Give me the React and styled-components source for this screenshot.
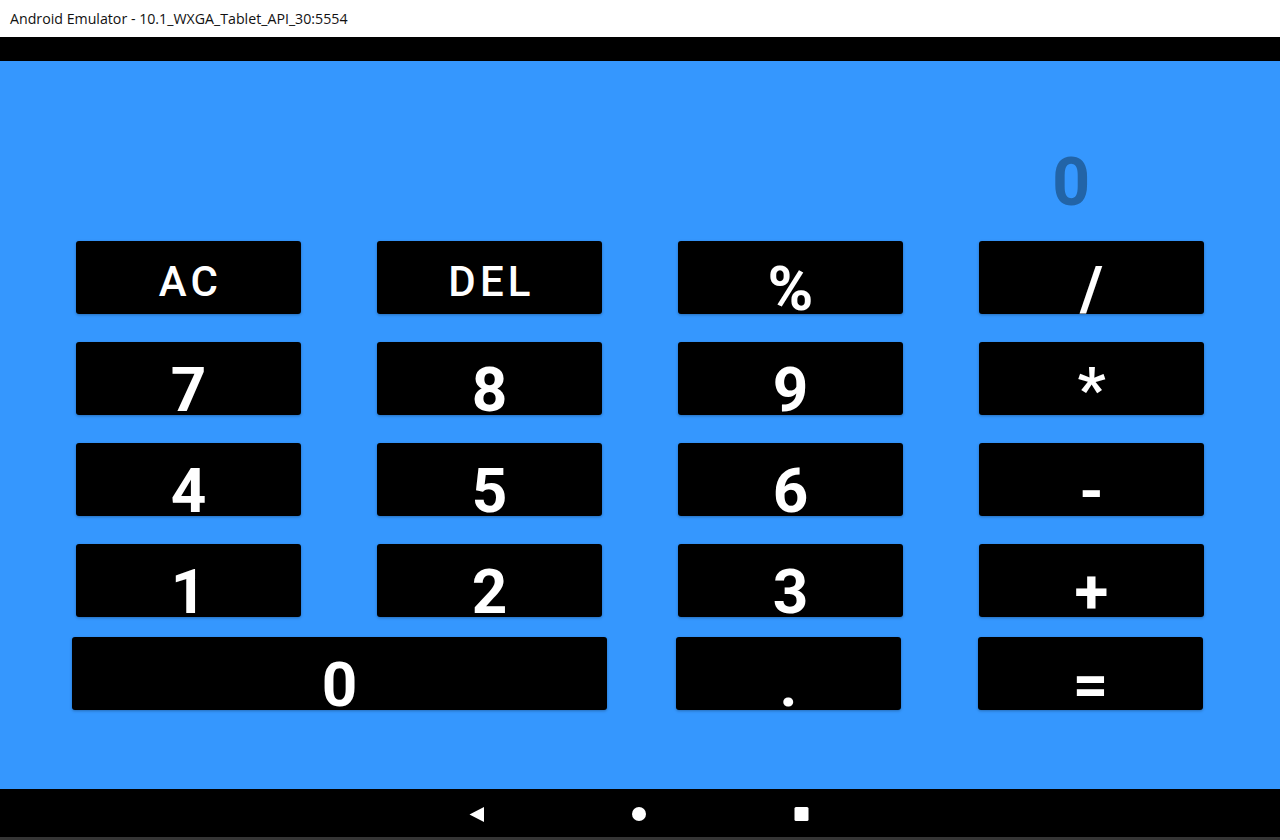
import React from "react"
import styled, { createGlobalStyle } from "styled-components"

const GlobalStyle = createGlobalStyle`
  html, body {
    margin: 0;
    padding: 0;
    background: #fff;
  }
  #root {
    width: 1280px;
    height: 840px;
  }
`

const Window = styled.div`
  width: 1280px;
  height: 840px;
  display: flex;
  flex-direction: column;
  overflow: hidden;
`

const TitleBar = styled.div`
  height: 37px;
  flex: none;
  background: #fff;
  display: flex;
  align-items: center;
  padding-left: 10px;
  padding-bottom: 1px;
  box-sizing: border-box;
  font-family: "Open Sans", "Noto Sans", sans-serif;
  font-size: 14.2px;
  color: #111;
`

const StatusBar = styled.div`
  height: 24px;
  flex: none;
  background: #000;
`

const Screen = styled.div`
  flex: 1;
  background: #3597fe;
  font-family: Roboto, "Noto Sans", sans-serif;
  display: flex;
  flex-direction: column;
`

const Display = styled.div`
  height: 180px;
  box-sizing: border-box;
  padding-top: 89px;
  padding-right: 190px;
  text-align: right;
  font-size: 66px;
  line-height: 1;
  font-weight: 700;
  color: #2264a7;
`

const Keypad = styled.div`
  display: grid;
  grid-template-columns: repeat(4, 225px);
  grid-auto-rows: 73px;
  column-gap: 76px;
  row-gap: 28px;
  padding-left: 76px;
`

const BottomRow = styled.div`
  display: flex;
  margin-top: 20px;
  padding-left: 72px;
  height: 73px;
`

const Key = styled.button`
  all: unset;
  box-sizing: border-box;
  width: ${p => p.$w || 225}px;
  height: 73px;
  margin-left: ${p => p.$ml || 0}px;
  background: #000;
  border-radius: 3px;
  box-shadow: 0 1px 3px rgba(0, 0, 0, 0.28);
  color: #fff;
  text-align: center;
  padding-top: ${p => (p.$word ? 8 : 17)}px;
  padding-left: ${p => (p.$word ? 4 : 0)}px;
  line-height: 1;
  font-family: Roboto, "Noto Sans", sans-serif;
  font-size: ${p => (p.$word ? 42 : 62)}px;
  font-weight: ${p => (p.$word ? 500 : 700)};
  letter-spacing: ${p => (p.$word ? "0.1em" : "0")};
  white-space: nowrap;
  overflow: visible;
`

const NavBar = styled.div`
  height: 48px;
  flex: none;
  background: #000;
  display: flex;
  align-items: center;
  justify-content: center;
  gap: 148px;
  padding-right: 2px;
  padding-top: 2px;
  box-sizing: border-box;
`

const Strip = styled.div`
  height: 3px;
  flex: none;
  background: #353535;
`

const BackIcon = () => (
  <svg width="15" height="15" viewBox="0 0 15 15">
    <path d="M15 0 L0.5 7.5 L15 15 Z" fill="#fff" />
  </svg>
)

const HomeIcon = () => (
  <svg width="14" height="14" viewBox="0 0 14 14">
    <circle cx="7" cy="7" r="7" fill="#fff" />
  </svg>
)

const RecentIcon = () => (
  <svg width="15" height="14" viewBox="0 0 15 14">
    <rect x="0.5" y="0" width="14" height="14" rx="1.5" fill="#fff" />
  </svg>
)

const rows = [
  ["AC", "DEL", "%", "/"],
  ["7", "8", "9", "*"],
  ["4", "5", "6", "-"],
  ["1", "2", "3", "+"]
]

export default function App() {
  return (
    <Window>
      <GlobalStyle />
      <TitleBar>Android Emulator - 10.1_WXGA_Tablet_API_30:5554</TitleBar>
      <StatusBar />
      <Screen>
        <Display>0</Display>
        <Keypad>
          {rows.flat().map(k => (
            <Key key={k} $word={k.length > 1}>
              {k}
            </Key>
          ))}
        </Keypad>
        <BottomRow>
          <Key $w={535}>0</Key>
          <Key $ml={69}>.</Key>
          <Key $ml={77}>=</Key>
        </BottomRow>
      </Screen>
      <NavBar>
        <BackIcon />
        <HomeIcon />
        <RecentIcon />
      </NavBar>
      <Strip />
    </Window>
  )
}
